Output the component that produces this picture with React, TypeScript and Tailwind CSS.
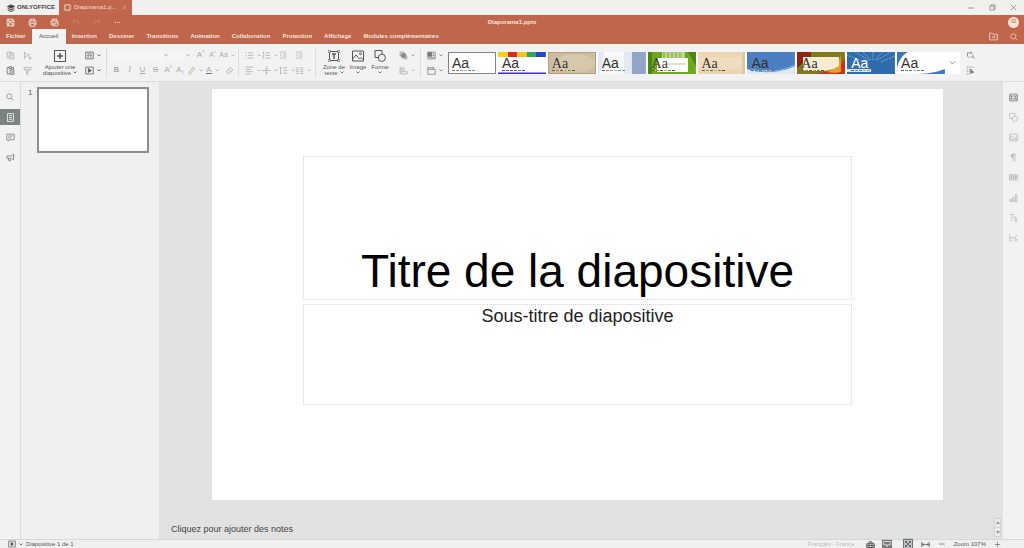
import type { ReactNode } from 'react';
import clsx from 'clsx';

type IconProps = { children: ReactNode; className?: string };

// Every icon is drawn on a 12x12 grid
function Icon({ children, className = 'size-[9px]' }: IconProps) {
  return (
    <svg viewBox="0 0 12 12" fill="none" stroke="currentColor" strokeWidth="1" className={clsx('block shrink-0', className)} aria-hidden="true">
      {children}
    </svg>
  );
}

const icons = {
  save: <path d="M1.5 1.5h7.5l1.5 1.5v7.5h-9zM3.5 1.5v3h5v-3M3.5 10.5v-4h5v4" strokeWidth="1.300" />,
  print: <path d="M3 4V1.5h6V4M3 8.500H1.500V4h9v4.500H9M3 7h6v4H3z" strokeWidth="1.300" />,
  quickPrint: <><path d="M3 4V1.500h6V4M5 8.500H1.500V4h9v3M3 7h3M3 10.500h3" strokeWidth="1.300" /><circle cx="8.500" cy="8.500" r="2.200" strokeWidth="1.300" /></>,
  undo: <path d="M2 2v3.500h3.500M2.200 5.300C5 2 9.500 3 10 7c0 1.500-.5 2.500-1.500 3" />,
  redo: <path d="M10 2v3.500H6.500M9.800 5.300C7 2 2.500 3 2 7c0 1.500.5 2.500 1.500 3" />,
  dots: <path d="M1.500 6h2M5 6h2M8.500 6h2" strokeWidth="1.600" />,
  copy: <path d="M4.500 8.500h-3v-7h6v2M4.500 3.500h6v7h-6zM6 6h3M6 8h3" />,
  paste: <path d="M5 10.500H1.500V2H4M8 2h2v2.500M4 1h4v2.200H4zM5.500 5h5v6h-5zM7 7h2.200M7 9h2.200" strokeWidth="1.200" />,
  cut: <><path d="M2 1.500l7 7M2 10.500V1.500M2.500 8.500L6 6M10 4L7 5.500" /><circle cx="9.500" cy="9.500" r="1.200" /></>,
  brush: <path d="M1.500 2h9v3h-9zM3.500 5l2 3.500M8.500 5L6.500 7v4h-1.500V8" />,
  addSlide: <><path d="M.5.5h11v11H.500z" /><path d="M6 3v6M3 6h6" strokeWidth="1.500" /></>,
  layout: <path d="M1 1.500h10v9H1zM3 4h6M3 6h2.500M6.500 6H9M3 8h2.500M6.500 8H9" />,
  play: <><path d="M1 1.500h10v9H1z" /><path d="M4.500 3.500v5L8.500 6z" fill="currentColor" /></>,
  highlighter: <><path d="M3 8l5-6.500 2 1.700L5 9.500 2.500 10z" /><path d="M1 11.500h8" stroke="#e8e27a" /></>,
  eraser: <path d="M1.500 8L7 2l3.500 3L5.500 10.500H4zM4 5l4 3.200" />,
  bullets: <path d="M1 2.500h1.500M4 2.500h7M1 6h1.500M4 6h7M1 9.500h1.500M4 9.500h7" />,
  numbers: <path d="M2 1v3M1 6h1.500L1 8h1.500M1 10.500h1.500M4.500 2.500H11M4.500 6H11M4.500 9.500H11" />,
  outdent: <path d="M1 1.500h10M6 4.500h5M6 7.500h5M1 10.500h10M4 4L1.500 6 4 8" />,
  indent: <path d="M1 1.500h10M6 4.500h5M6 7.500h5M1 10.500h10M1.500 4L4 6 1.500 8" />,
  align: <path d="M1 1.500h10M1 4.500h7M1 7.500h10M1 10.500h7" />,
  vertical: <path d="M0 6h12M6 .5v4M6 11.500v-4M4.500 3L6 4.500 7.500 3M4.500 9L6 7.500 7.500 9" />,
  spacing: <path d="M2 1.500v9M.5 3L2 1.500 3.500 3M.5 9L2 10.500 3.500 9M5.500 2.500H11M5.500 6H11M5.500 9.500H11" />,
  columns: <path d="M1 2.500h4M1 5h4M1 7.500h4M1 10h4M7 2.500h4M7 5h4M7 7.500h4M7 10h4" />,
  textBox: <><path d="M1.500 1.500h9v9h-9z" /><path d="M.5.5h2v2h-2zM9.500.5h2v2h-2zM.5 9.500h2v2h-2zM9.500 9.500h2v2h-2z" fill="#f1f1f1" strokeWidth=".6" /><path d="M4 4h4M6 4v5" strokeWidth="1.400" /></>,
  image: <><path d="M.5 1h11v10H.500zM.5 9l3.500-4 3.500 4 1.500-1.500 2.500 2.500" /><circle cx="8.500" cy="3.700" r="1" /></>,
  shape: <><path d="M5 7.500H1v-7h7V4" /><circle cx="7.800" cy="7.800" r="3.600" /></>,
  arrange: <><path d="M1.500 1.500h5v5h-5zM6.500 6.500h4v4h-4z" /><path d="M3.500 3.500h5v5h-5z" fill="currentColor" /></>,
  alignShapes: <path d="M1.500 1v10M3 2.500h4v3H3zM3 7.500h8v3H3z" />,
  colors: <><path d="M1 1.500h10v9H1z" /><path d="M1.500 2h5v5h-5z" fill="currentColor" /><path d="M8 4h2M8 6h2M3 8.500h7" /></>,
  size: <path d="M1 4.500h10v6.500H1zM1 2.500h6M1 1.200v2.600M7 1.200v2.600M9 1v3" />,
  replace: <path d="M2 7V2.500h6M6.500 1L8 2.500 6.500 4M2 6.500L4 9M6 8h3M9 5l2 5" />,
  select: <><path d="M1 1.500h9M1 4.500h4M1 7.500h4M1 10.500h4" strokeDasharray="1.500 1" /><path d="M6 4l4.500 4.500H8L6.500 10.500z" fill="currentColor" /></>,
  search: <><circle cx="5" cy="5" r="3.800" /><path d="M8 8l3 3" /></>,
  folder: <path d="M.8 10.500v-9h3.700l1 1.500h5.700v7.500zM4 6.700h4M6.500 5L8 6.700 6.500 8.400" />,
  slides: <path d="M2 .8h8v10.400H2zM4 3.500h4M4 6h4M4 8.500h4" />,
  comments: <path d="M1 1.500h10v7.500H5L3 11V9H1zM3 4h6M3 6.500h4" />,
  feedback: <path d="M1 4l6 0 3-2.500v8L7 7H1zM3 7.500L4 10.500h2L5 7.500M10.500 5h1" />,
  slideSettings: <path d="M1 1.500h10v9H1zM3.500 4h5v4h-5zM1 4h2.500M1 8h2.500M8.500 4H11M8.500 8H11" strokeWidth="1.200" />,
  imageSettings: <path d="M1 1.500h10v9H1zM1 6l3-1.500L7 7l4-2M1 8.500h10" />,
  paragraph: <><path d="M5.500 2v9M8 2v9M4 1.500h5" /><path d="M5 1.500a2.200 2.200 0 000 4.400z" fill="currentColor" /></>,
  table: <path d="M0 2.500h12M.5 5h11M1 2v8.500M3.500 2v8.500M6 2v8.500M8.500 2v8.500M11 2v8.500M.5 7.500h11" />,
  chart: <path d="M1.500 11V8H3v3M5 11V5.500h1.500V11M8.500 11V2H10.500v9M.5 11h11" />,
  textArt: <path d="M1 2h6M4 2v8M2.500 10H4M6 5.500h4M8 5.500V11h2.500V8H8" />,
  signature: <path d="M1 1.500v9h3M1 6h2M3.500 8l1.500-3 2 3 4-6M7 10.500h4M8 8l3 1" />,
  globe: <path d="M1 5h10v5H1zM4 5V2.500h4V5M4 5v5M8 5v5M1 7.500h10" strokeWidth="1.300" />,
  notes: <><path d="M0 1h12v10H0z" fill="currentColor" stroke="none" /><path d="M2 3h8v4H7L6 9V7H2z" stroke="#eee" /></>,
  fitSlide: <path d="M.5.500h11v11H.500zM3 3l6 6M9 3L3 9M3 5V3h2M7 3h2v2M9 7v2H7M5 9H3V7" />,
  fitWidth: <path d="M1 2.500v7M11 2.500v7M1.500 6h9M3.500 4L1.500 6l2 2M8.500 4l2 2-2 2" />,
  minus: <path d="M2 6h8" />,
  plus: <path d="M1.500 6h9M6 1.500v9" />,
  close: <path d="M1.500 1.500l9 9M10.500 1.500l-9 9" />,
  restore: <path d="M1.500 3.500h7v7h-7zM3.500 3.500v-2h7v7h-2" />,
  check: <path d="M1.500 4l4.500 4.500L10.500 4" stroke="#777" strokeWidth="1.300" />,
  file: <path d="M1.500 1.500h9v9h-9z" strokeWidth="1.600" />,
  stack: <><path d="M6 1L.5 3.800 6 6.500l5.500-2.700z" fill="currentColor" /><path d="M1 6.300L6 8.800l5-2.500M1 8.800l5 2.500 5-2.500" strokeWidth="1.400" /></>,
};

type IconName = keyof typeof icons;

function Caret() {
  return (
    <svg viewBox="0 0 4 3" fill="none" stroke="currentColor" strokeWidth=".8" className="block h-[3px] w-1 shrink-0" aria-hidden="true">
      <path d="M.5.500L2 2 3.500.500" />
    </svg>
  );
}

type ToolProps = { label: string; icon?: IconName; caret?: boolean; className?: string; iconClass?: string; children?: ReactNode };

function Tool({ label, icon, caret, className, iconClass, children }: ToolProps) {
  return (
    <button type="button" aria-label={label} className={clsx('flex h-3 shrink-0 items-center justify-center gap-[3px]', className)}>
      {icon ? <Icon className={iconClass}>{icons[icon]}</Icon> : children}
      {caret && <Caret />}
    </button>
  );
}

function BigTool({ icon, lines, className }: { icon: IconName; lines: string[]; className: string }) {
  return (
    <button type="button" className={clsx('flex shrink-0 flex-col items-center text-[6px] leading-[6px] text-[#555]', className)}>
      <Icon className="mb-[2px] size-3 text-[#555]">{icons[icon]}</Icon>
      {lines.map((line, i) => (
        <span key={line} className="flex items-center gap-[2px] whitespace-nowrap">
          {line}
          {i > 0 && i === lines.length - 1 && <Caret />}
        </span>
      ))}
      {lines.length === 1 && <span className="flex h-[6px] items-center"><Caret /></span>}
    </button>
  );
}

const Separator = () => <div className="h-[30px] w-px shrink-0 bg-[#dedede]" />;

const menus = ['Insertion', 'Dessiner', 'Transitions', 'Animation', 'Collaboration', 'Protection', 'Affichage', 'Modules complémentaires'];

type Theme = { name: string; serif?: boolean; light?: boolean; art: ReactNode; dots: string[] };

const office = ['#4a6fb5', '#d9703a', '#9a9a9a', '#e8b93a', '#4c9ad0', '#6aa84f'];
const earth = ['#6b5a42', '#a8875a', '#8a4d2e', '#c9a96a', '#7a7a5a', '#5a4632'];
const blues = ['#2f5fa0', '#5a86c0', '#3f7fb0', '#8fb0d8', '#c08040', '#4a6a9a'];

const themes: Theme[] = [
  { name: 'Vierge', dots: office, art: <path d="M0 0h48v22H0z" fill="#fff" /> },
  {
    name: 'Basique',
    dots: ['#3b3bd0', '#a83ac0', '#3b3bd0', '#d03a3a', '#3a9a4a', '#3b3bd0'],
    art: <><path d="M0 0h48v22H0z" fill="#fff" /><path d="M0 0h10v5H0z" fill="#f0d21c" /><path d="M10 0h9v5h-9z" fill="#e0261f" /><path d="M19 0h10v5H19z" fill="#f2c81c" /><path d="M29 0h9v5h-9z" fill="#2fa556" /><path d="M38 0h10v5H38z" fill="#2547c8" /><path d="M0 20.500h48V22H0z" fill="#3a30d0" /></>,
  },
  {
    name: 'Classique', serif: true, dots: earth,
    art: <><path d="M0 0h48v22H0z" fill="#cdbda0" /><ellipse cx="27" cy="11" rx="21" ry="9" fill="#d6c8ad" /><path d="M0 0h48v22H0z" fill="none" stroke="#a99674" strokeWidth="1.500" /></>,
  },
  {
    name: 'Officiel', dots: office,
    art: <><path d="M0 0h48v22H0z" fill="#e3e9f2" /><path d="M6 0h20v22H2z" fill="#f7f9fb" /><path d="M34 0h14v22H34z" fill="#92a5c6" /></>,
  },
  {
    name: 'Feuille verte', serif: true, dots: earth,
    art: <><path d="M0 0h48v22H0z" fill="#6ea81e" /><path d="M14 0h23v6H14z" fill="#b9d68a" /><path d="M16 0v6M20 0v6M24 0v6M28 0v6M32 0v6" stroke="#7ba53c" /><path d="M0 0h4v22H0zM40 0l8 14V0z" fill="#4b8612" /><path d="M9 6h31v14H9z" fill="#fff" /><path d="M20 12h18" stroke="#b5c8a0" /></>,
  },
  {
    name: 'Lignes', serif: true, dots: earth,
    art: <><path d="M0 0h48v22H0z" fill="#ecd5b3" /><path d="M0 5h44v12H0z" fill="#f0dcc0" /><path d="M46 0v22" stroke="#e0c49c" strokeWidth="3" /></>,
  },
  {
    name: 'Bureau', dots: blues,
    art: <><path d="M0 0h48v22H0z" fill="#4b7fc0" /><path d="M0 22v-5c14 5 34 4 48-3v8z" fill="#dce8f4" /><path d="M4 17c14 4 30 3 44-4" stroke="#8fb2dc" fill="none" /></>,
  },
  {
    name: 'Safari', serif: true, dots: earth,
    art: <><path d="M0 0h48v22H0z" fill="#7f7a1e" /><path d="M0 0h14v5L0 16z" fill="#8f2214" /><path d="M48 6v16H10c20 0 34-6 38-16z" fill="#c8321a" /><path d="M44 2v18c-4 1-10 1-14 0 8-3 12-9 14-18z" fill="#e8a02c" /><path d="M6 5h36v9c-6 4-12 5-20 5H6z" fill="#f5ecd2" /></>,
  },
  {
    name: 'Pixel', light: true, dots: blues,
    art: <><path d="M0 0h48v22H0z" fill="#2f6cab" /><path d="M22 8L8 0M24 8L16 0M26 8V0M28 8l8-8M30 8l14-8M18 10L0 3M34 10l14-6" stroke="#7fa9d4" strokeWidth="1" strokeDasharray="2 1" /><path d="M0 17h24v3H0z" fill="#dbe7f3" /></>,
  },
  {
    name: 'Coin', dots: blues,
    art: <><path d="M0 0h48v22H0z" fill="#fff" /><path d="M0 0h11C4 4 2 9 0 16z" fill="#3f78b8" /><path d="M48 17v5H16c12 0 22-1 32-5z" fill="#3f78b8" /></>,
  },
];

function ThemeThumb({ theme, active }: { theme: Theme; active: boolean }) {
  return (
    <button type="button" aria-label={theme.name} className="relative flex h-[22px] flex-col items-start justify-end overflow-hidden pb-[3px] pl-1">
      <svg viewBox="0 0 48 22" preserveAspectRatio="none" className="absolute inset-0 size-full" aria-hidden="true">{theme.art}</svg>
      <span className={clsx('relative text-[14px] leading-[13px]', theme.serif && "font-['Liberation_Serif',serif]", theme.light ? 'text-white' : 'text-[#333]')}>Aa</span>
      <span className="relative flex gap-px bg-white/70">
        {theme.dots.map((color, i) => (
          <span key={i} className="h-px w-[3px]" style={{ backgroundColor: color }} />
        ))}
      </span>
      {active && <span className="absolute inset-0 border border-[#848484]" />}
    </button>
  );
}

function TitleBar() {
  return (
    <div className="flex h-[15px] shrink-0 items-stretch bg-[#f0f1ef]">
      <button type="button" className="flex w-[59px] items-center gap-[2px] pl-[7px] text-[6px] font-bold text-[#444]">
        <Icon className="size-2">{icons.stack}</Icon>
        <span>ONLYOFFICE</span>
      </button>
      <div className="flex w-[73px] items-center bg-[#c0674e] pr-[5px] pl-[5px] text-[6px] text-[#f8ded4]">
        <Icon className="mr-[3px] size-[7px]">{icons.file}</Icon>
        <span className="flex-1">Diaporama1.p...</span>
        <button type="button" aria-label="Fermer l'onglet"><Icon className="size-[5px]">{icons.close}</Icon></button>
      </div>
      <div className="ml-auto flex items-center gap-[14px] pr-[7px] text-[#666]">
        <button type="button" aria-label="Réduire"><Icon className="size-2">{icons.minus}</Icon></button>
        <button type="button" aria-label="Restaurer"><Icon className="size-[7px]">{icons.restore}</Icon></button>
        <button type="button" aria-label="Fermer"><Icon className="size-[7px]">{icons.close}</Icon></button>
      </div>
    </div>
  );
}

function Header() {
  return (
    <header className="shrink-0 bg-[#bf664d] text-[#fbe3d8]">
      <div className="grid h-[14px] grid-cols-[1fr_auto_1fr] items-center">
        <div className="flex items-center gap-[13px] pl-[6px]">
          <Tool label="Enregistrer" icon="save" />
          <Tool label="Imprimer" icon="print" />
          <Tool label="Impression rapide" icon="quickPrint" />
          <Tool label="Annuler" icon="undo" className="text-[#d58f7b]" iconClass="size-2" />
          <Tool label="Rétablir" icon="redo" className="text-[#d58f7b]" iconClass="size-2" />
          <Tool label="Plus" icon="dots" iconClass="size-[7px]" />
        </div>
        <h1 className="text-[6px] font-bold">Diaporama1.pptx</h1>
        <div className="flex justify-end pr-[5px]">
          <button type="button" aria-label="Profil" className="flex size-[11px] items-center justify-center rounded-full bg-[#fbe3d2] text-[5px] text-[#9a5a46]">ID</button>
        </div>
      </div>
      <nav className="flex h-[15px] items-stretch text-[6px] font-bold">
        <button type="button" className="px-[6px]">Fichier</button>
        <button type="button" className="w-[34px] rounded-t-[1px] bg-[#f3f3f3] font-normal text-[#555]">Accueil</button>
        {menus.map((menu) => (
          <button key={menu} type="button" className="px-[6px] whitespace-nowrap">{menu}</button>
        ))}
        <div className="ml-auto flex items-center gap-3 pr-[6px]">
          <Tool label="Ouvrir l'emplacement" icon="folder" />
          <Tool label="Rechercher" icon="search" iconClass="size-2" />
        </div>
      </nav>
    </header>
  );
}

function Toolbar() {
  return (
    <div className="flex h-[38px] shrink-0 items-center border-b border-[#dcdcdc] bg-[#f2f2f2] text-[#aaa]">
      <div className="grid w-[40px] shrink-0 grid-cols-2 gap-y-[3px] pr-1">
        <Tool label="Copier" icon="copy" className="pl-[3px]" />
        <Tool label="Couper" icon="cut" />
        <Tool label="Coller" icon="paste" className="pl-[3px] text-[#777]" />
        <Tool label="Copier le style" icon="brush" />
      </div>
      <BigTool icon="addSlide" lines={['Ajouter une', 'diapositive']} className="w-10" />
      <div className="flex w-[26px] shrink-0 flex-col items-center gap-[3px] text-[#555]">
        <Tool label="Disposition" icon="layout" caret />
        <Tool label="Démarrer le diaporama" icon="play" caret />
      </div>
      <Separator />
      <div className="flex w-[131px] shrink-0 flex-col gap-[3px] pl-[3px] text-[8px]">
        <div className="flex h-3 items-center">
          <div className="flex w-[58px] items-center">
            <select aria-label="Police" className="h-[11px] flex-1 appearance-none bg-[#f5f5f5]" />
            <Caret />
          </div>
          <div className="flex w-[22px] items-center">
            <select aria-label="Taille de police" className="h-[11px] flex-1 appearance-none bg-[#f5f5f5]" />
            <Caret />
          </div>
          <Tool label="Agrandir la police" className="ml-1 w-[13px]">A<span className="-ml-[3px] self-start text-[5px]">^</span></Tool>
          <Tool label="Réduire la police" className="w-[11px]"><span className="text-[7px]">A</span><span className="-ml-[3px] self-start text-[4px]">v</span></Tool>
          <Tool label="Changer la casse" caret className="w-[18px]"><span className="text-[7px]">Aa</span></Tool>
        </div>
        <div className="flex h-3 items-center">
          <Tool label="Gras" className="w-[13px]"><b>B</b></Tool>
          <Tool label="Italique" className="w-[13px]"><i className="font-['Liberation_Serif',serif]">I</i></Tool>
          <Tool label="Souligné" className="w-[13px]"><u>U</u></Tool>
          <Tool label="Barré" className="w-[13px]"><s>S</s></Tool>
          <Tool label="Exposant" className="w-[12px]">A<span className="-ml-[3px] self-start text-[4px]">2</span></Tool>
          <Tool label="Indice" className="w-[12px]">A<span className="-ml-[3px] self-end text-[4px]">2</span></Tool>
          <Tool label="Surlignage" icon="highlighter" caret className="w-[18px]" />
          <Tool label="Couleur de police" caret className="w-[17px]"><span className="border-b border-[#777] leading-[7px]">A</span></Tool>
          <Tool label="Effacer le style" icon="eraser" className="w-4" />
        </div>
      </div>
      <Separator />
      <div className="grid w-[76px] shrink-0 grid-cols-[17px_17px_16px_17px] justify-items-start gap-y-[3px] pl-[6px]">
        <Tool label="Puces" icon="bullets" caret />
        <Tool label="Numérotation" icon="numbers" caret />
        <Tool label="Réduire le retrait" icon="outdent" iconClass="size-2" />
        <Tool label="Augmenter le retrait" icon="indent" iconClass="size-2" />
        <Tool label="Alignement horizontal" icon="align" caret />
        <Tool label="Alignement vertical" icon="vertical" caret />
        <Tool label="Interligne" icon="spacing" caret />
        <Tool label="Colonnes" icon="columns" caret />
      </div>
      <Separator />
      <div className="flex w-[78px] shrink-0 items-start pl-[5px]">
        <BigTool icon="textBox" lines={['Zone de', 'texte']} className="w-[26px]" />
        <BigTool icon="image" lines={['Image']} className="w-[22px]" />
        <BigTool icon="shape" lines={['Forme']} className="w-[22px]" />
      </div>
      <div className="flex w-[26px] shrink-0 flex-col items-center gap-[3px]">
        <Tool label="Organiser" icon="arrange" caret className="text-[#888]" />
        <Tool label="Aligner les formes" icon="alignShapes" caret />
      </div>
      <Separator />
      <div className="flex w-[27px] shrink-0 flex-col items-center gap-[3px] text-[#777]">
        <Tool label="Couleurs" icon="colors" caret />
        <Tool label="Taille de diapositive" icon="size" caret />
      </div>
      <div className="flex w-[512px] shrink-0 items-center bg-white">
        <div className="grid w-[497px] grid-cols-10 gap-[2px]">
          {themes.map((theme, i) => (
            <ThemeThumb key={theme.name} theme={theme} active={i === 0} />
          ))}
        </div>
        <Tool label="Plus de thèmes" icon="check" className="flex-1" iconClass="size-[7px]" />
      </div>
      <div className="flex flex-col gap-[3px] pl-[6px] text-[#777]">
        <Tool label="Remplacer" icon="replace" />
        <Tool label="Sélectionner" icon="select" />
      </div>
    </div>
  );
}

const leftTools: { label: string; icon: IconName }[] = [
  { label: 'Rechercher', icon: 'search' },
  { label: 'Diapositives', icon: 'slides' },
  { label: 'Commentaires', icon: 'comments' },
  { label: 'Commentaires et assistance', icon: 'feedback' },
];

const rightTools: { label: string; icon: IconName }[] = [
  { label: 'Paramètres de la diapositive', icon: 'slideSettings' },
  { label: 'Paramètres de la forme', icon: 'shape' },
  { label: "Paramètres de l'image", icon: 'imageSettings' },
  { label: 'Paramètres du paragraphe', icon: 'paragraph' },
  { label: 'Paramètres du tableau', icon: 'table' },
  { label: 'Paramètres du graphique', icon: 'chart' },
  { label: 'Paramètres de Text Art', icon: 'textArt' },
  { label: 'Signature', icon: 'signature' },
];

function Workspace() {
  return (
    <div className="flex min-h-0 flex-1">
      <aside className="flex w-[21px] shrink-0 flex-col gap-1 border-r border-[#dcdcdc] bg-[#f2f2f2] pt-[7px] text-[#777]">
        {leftTools.map(({ label, icon }) => (
          <button key={label} type="button" aria-label={label} className={clsx('flex h-4 items-center justify-center', icon === 'slides' && 'bg-[#7c8383] text-white')}>
            <Icon className={icon === 'search' ? 'size-2' : 'size-[9px]'}>{icons[icon]}</Icon>
          </button>
        ))}
      </aside>
      <aside className="flex w-[138px] shrink-0 items-start gap-[5px] bg-[#f0f0f0] pt-[5px] pl-[7px]">
        <span className="w-1 pt-px text-[8px] leading-[10px] text-[#666]">1</span>
        <button type="button" aria-label="Diapositive 1" className="h-[66px] w-[112px] border-2 border-[#8d8d8d] bg-white" />
      </aside>
      <main className="flex min-w-0 flex-1 flex-col bg-[#e2e2e2]">
        <section className="mt-[7px] mr-[60px] ml-[53px] aspect-video bg-white pt-[67px] text-center">
          <div className="mx-auto flex h-[144px] w-3/4 items-end justify-center border border-dotted border-[#d6d6d6] pb-[5px]">
            <h2 className="text-[46px] leading-[46px] whitespace-nowrap text-black">Titre de la diapositive</h2>
          </div>
          <div className="mx-auto mt-1 h-[101px] w-3/4 border border-dotted border-[#d6d6d6] pt-[2px]">
            <p className="text-[18px] leading-[18px] text-[#222]">Sous-titre de diapositive</p>
          </div>
        </section>
        <div className="mt-auto flex items-end justify-between pr-[2px] pl-3">
          <p className="pb-1 text-[9px] leading-[11px] text-[#444]">Cliquez pour ajouter des notes</p>
          <div className="mb-[2px] flex h-[19px] w-[7px] flex-col items-center justify-between border border-[#d2d2d2] bg-[#ececec] py-[2px] text-[#999]">
            <svg viewBox="0 0 4 3" className="h-[3px] w-1" aria-hidden="true"><path d="M0 3l2-3 2 3z" fill="currentColor" /></svg>
            <span className="h-px w-full bg-[#d2d2d2]" />
            <svg viewBox="0 0 4 3" className="h-[3px] w-1" aria-hidden="true"><path d="M0 0l2 3 2-3z" fill="currentColor" /></svg>
          </div>
        </div>
      </main>
      <aside className="flex w-[21px] shrink-0 flex-col gap-1 bg-[#f2f2f2] pt-[7px] text-[#b5b5b5]">
        {rightTools.map(({ label, icon }, i) => (
          <button key={label} type="button" aria-label={label} className={clsx('flex h-4 items-center justify-center', i === 0 && 'text-[#858585]')}>
            <Icon>{icons[icon]}</Icon>
          </button>
        ))}
      </aside>
    </div>
  );
}

function StatusBar() {
  return (
    <footer className="flex h-[9px] shrink-0 items-center border-t border-[#d6d6d6] bg-[#f0f0f0] text-[6px] leading-[8px] text-[#555]">
      <Tool label="Démarrer le diaporama" icon="play" caret className="w-[26px] pr-[2px] pl-[6px]" iconClass="size-2" />
      <span>Diapositive 1 de 1</span>
      <div className="ml-auto flex items-center pr-[23px]">
        <span className="mr-[11px] text-[#bdbdbd]">Français - France</span>
        <Tool label="Langue" icon="globe" className="mr-[7px]" />
        <Tool label="Notes" icon="notes" className="mr-[11px] text-[#777]" iconClass="size-[10px]" />
        <Tool label="Ajuster à la diapositive" icon="fitSlide" className="mr-2 bg-[#c4cccb]" iconClass="size-[10px]" />
        <Tool label="Ajuster à la largeur" icon="fitWidth" className="mr-2" />
        <Tool label="Zoom arrière" icon="minus" className="mr-2" iconClass="size-2" />
        <span className="mr-2">Zoom 107%</span>
        <Tool label="Zoom avant" icon="plus" iconClass="size-[7px]" />
      </div>
    </footer>
  );
}

export default function App() {
  return (
    <div className="flex h-screen flex-col overflow-hidden bg-[#f0f0f0] font-['Liberation_Sans',Arial,sans-serif]">
      <TitleBar />
      <Header />
      <Toolbar />
      <Workspace />
      <StatusBar />
    </div>
  );
}
